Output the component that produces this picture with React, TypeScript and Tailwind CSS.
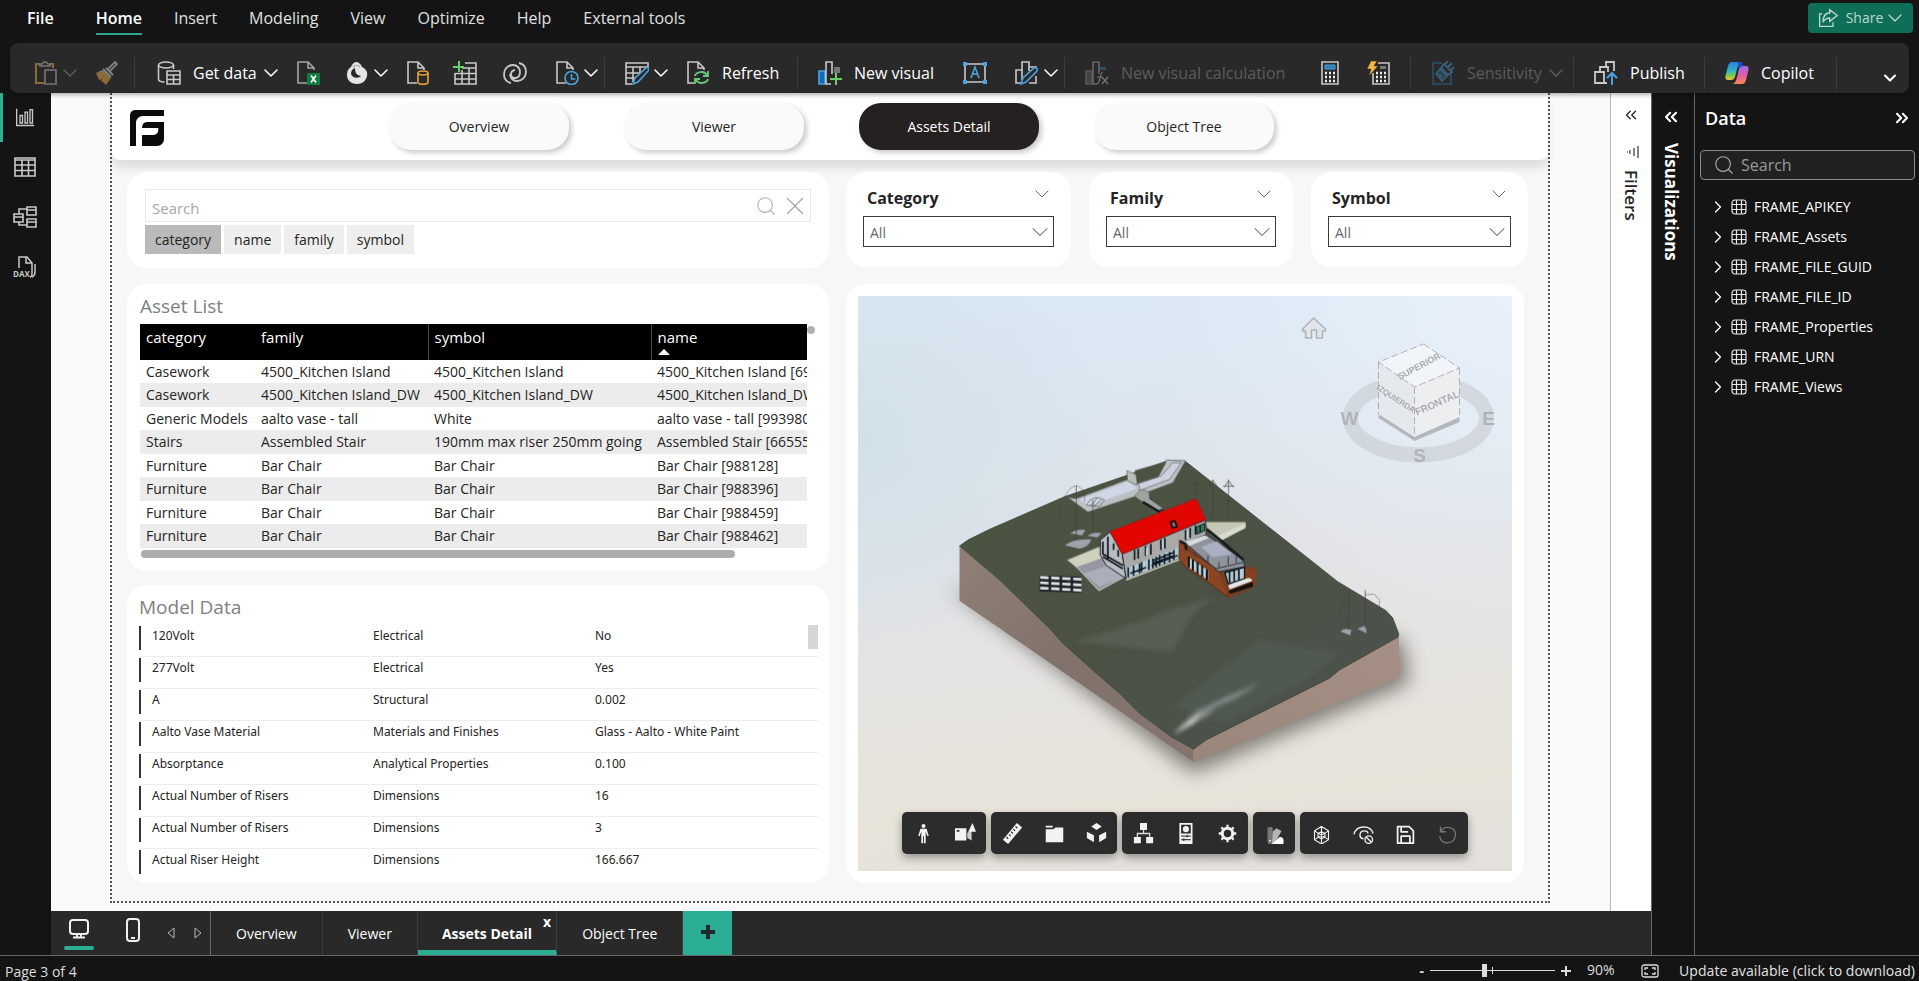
import type { ReactNode } from 'react';
import { ChevronDown, ChevronRight, ChevronsLeft, ChevronsRight, Search, X } from 'lucide-react';

const MENU = ['Insert', 'Modeling', 'View', 'Optimize', 'Help', 'External tools'];
const REPORT_PAGES = ['Overview', 'Viewer', 'Assets Detail', 'Object Tree'];
const ACTIVE_PAGE = 'Assets Detail';
const SEARCH_FIELDS = ['category', 'name', 'family', 'symbol'];

const ASSETS = [
  ['Casework', '4500_Kitchen Island', '4500_Kitchen Island', '4500_Kitchen Island [694112]'],
  ['Casework', '4500_Kitchen Island_DW', '4500_Kitchen Island_DW', '4500_Kitchen Island_DW [694205]'],
  ['Generic Models', 'aalto vase - tall', 'White', 'aalto vase - tall [993980]'],
  ['Stairs', 'Assembled Stair', '190mm max riser 250mm going', 'Assembled Stair [665552]'],
  ['Furniture', 'Bar Chair', 'Bar Chair', 'Bar Chair [988128]'],
  ['Furniture', 'Bar Chair', 'Bar Chair', 'Bar Chair [988396]'],
  ['Furniture', 'Bar Chair', 'Bar Chair', 'Bar Chair [988459]'],
  ['Furniture', 'Bar Chair', 'Bar Chair', 'Bar Chair [988462]'],
];

const MODEL_DATA = [
  ['120Volt', 'Electrical', 'No'],
  ['277Volt', 'Electrical', 'Yes'],
  ['A', 'Structural', '0.002'],
  ['Aalto Vase Material', 'Materials and Finishes', 'Glass - Aalto - White Paint'],
  ['Absorptance', 'Analytical Properties', '0.100'],
  ['Actual Number of Risers', 'Dimensions', '16'],
  ['Actual Number of Risers', 'Dimensions', '3'],
  ['Actual Riser Height', 'Dimensions', '166.667'],
];

const TABLES = [
  'FRAME_APIKEY',
  'FRAME_Assets',
  'FRAME_FILE_GUID',
  'FRAME_FILE_ID',
  'FRAME_Properties',
  'FRAME_URN',
  'FRAME_Views',
];

/* ---------- icons ---------- */

function Icon({ children, className = 'size-6' }: { children: ReactNode; className?: string }) {
  return (
    <svg viewBox="0 0 24 24" fill="none" stroke="#c8c8c8" strokeWidth="1.6" className={`${className} shrink-0`} aria-hidden="true">
      {children}
    </svg>
  );
}

const PAGE = 'M11 22H2V1h10l6 6v2M12 1v6h6';

const PasteIcon = () => (
  <Icon>
    <path d="M6 3H2v19h8M16 3h3v4" stroke="#8a6a35" strokeWidth="2" />
    <path d="M6 5V3h2l2-2h2l2 2h2v2z" stroke="#777" />
    <path d="M11 9h11v14H11z" stroke="#777" />
  </Icon>
);
const BrushIcon = () => (
  <Icon>
    <path d="M1 12l7-3 8 8-5 7c-3-3-4-4-5-4l1-2-3 1z" fill="#8a6a35" stroke="none" />
    <path d="M4 11l3-1 7 7" stroke="#777" strokeWidth="1" />
    <path d="M8 8l8 8M11 7l7 7M15 10l7-7-2-2-7 7" stroke="#808080" strokeWidth="1.800" />
  </Icon>
);
const GetDataIcon = () => (
  <Icon>
    <ellipse cx="9" cy="4" rx="7.5" ry="3" />
    <path d="M1.500 4v14c0 2 2 3 6 3M16.500 4v4M10 10h13v13H10zM10 14h13M16.500 14v9M10 18.500h13" />
  </Icon>
);
const ExcelIcon = () => (
  <Icon>
    <path d={PAGE} stroke="#a5a5a5" />
    <path d="M11 12h13v12H11z" fill="#107c41" stroke="none" />
    <path d="M15 14.500l5 7M20 14.500l-5 7" stroke="#fff" />
  </Icon>
);
const OneLakeIcon = () => (
  <Icon>
    <path d="M12 1c2 1 4 2 5 5 4 2 6 5 5 9-1 5-5 8-10 8S2 20 2 14c0-4 1-6 4-8 1-3 3-5 6-5z" fill="#e4e4e4" stroke="none" />
    <path d="M10 7c0 4 1 7 6 8-3 3-9 2-10-2 0-3 1-5 4-6z" fill="#292929" stroke="none" />
    <path d="M8 6c2-2 5-2 7 0" stroke="#aaa" />
  </Icon>
);
const SqlIcon = () => (
  <Icon>
    <path d={PAGE} />
    <path d="M12 12v9c0 3 10 3 10 0v-9" stroke="#e8a33d" fill="#292929" />
    <ellipse cx="17" cy="12" rx="5" ry="2" stroke="#e8a33d" />
  </Icon>
);
const EnterDataIcon = () => (
  <Icon>
    <path d="M12 2h11v21H2V12M9 7h14M2 12.500h21M2 18h21M9 9v14M16 7v16" />
    <path d="M6 0v11M0 6h11" stroke="#6bd06b" strokeWidth="2" />
  </Icon>
);
const DataverseIcon = () => (
  <Icon>
    <path
      d="M8 22c-5-1-7-4-7-9s4-9 9-9c4 0 7 3 7 7s-2 6-5 6-4-2-4-4 2-4 4-4M16 2c5 1 7 4 7 9s-4 9-9 9c-4 0-7-3-7-7"
      strokeWidth="1.8"
    />
  </Icon>
);
const RecentIcon = () => (
  <Icon>
    <path d={PAGE} />
    <circle cx="16.500" cy="17" r="6.500" stroke="#4aa3df" fill="#292929" />
    <path d="M16.500 13v5h4" stroke="#4aa3df" />
  </Icon>
);
const TransformIcon = () => (
  <Icon>
    <path d="M7 23H1V2h22v6M1 6h22M1 12h15M1 17h9M8 6v15M15 6v7" />
    <path d="M8 23l2-6L21 7c2-1 4 1 2 3L13 21z" stroke="#4aa3df" fill="#292929" />
  </Icon>
);
const RefreshIcon = () => (
  <Icon>
    <path d="M8 22H2V1h10l6 6v2M12 1v6h6" />
    <path d="M9 15c1-4 9-6 12-1M22 10v5h-5M22 18c-1 4-9 6-12 1M9 23v-5h5" stroke="#6bc77a" strokeWidth="1.800" />
  </Icon>
);
const NewVisualIcon = () => (
  <Icon>
    <path d="M1 10h6v13H1z" fill="#0f6cbd" stroke="#4aa3df" />
    <path d="M16 6h6v6h-6z" fill="#777" stroke="none" />
    <path d="M13 23H8V1h6v12" />
    <path d="M18 12v12M12 18h12" stroke="#6bd06b" strokeWidth="2" />
  </Icon>
);
const TextBoxIcon = () => (
  <Icon>
    <path d="M2 3h20v18H2z" />
    <path d="M0 1h4v4H0zM20 1h4v4h-4zM0 19h4v4H0zM20 19h4v4h-4z" fill="#4aa3df" stroke="none" />
    <path d="M8 17l4-11 4 11M9.500 13h5" stroke="#4aa3df" />
  </Icon>
);
const MoreVisualsIcon = () => (
  <Icon>
    <path d="M6 22H1V9h6v10M7 16V1h7v9M14 6h7v3M14 22h7v-7" />
    <path d="M6 23l2-6L19 7c2-1 4 1 3 3L11 21z" stroke="#4aa3df" fill="#292929" />
  </Icon>
);
const VisualCalcIcon = () => (
  <Icon>
    <path d="M1 10h6v13H1z" fill="#444" stroke="#555" />
    <path d="M8 23V1h6v12M8 23h4" stroke="#666" />
    <path d="M15 6h6v3h-6z" fill="#2d4f66" stroke="none" />
    <path d="M12 23c3 0 3-12 6-12M12 16h6M17 16l6 7M23 16l-6 7" stroke="#777" strokeWidth="1.200" />
  </Icon>
);
const CalculatorIcon = () => (
  <Icon>
    <path d="M4 1h16v22H4z" />
    <path d="M7 4h10v4H7z" fill="#2f7db5" stroke="#4aa3df" strokeWidth="1" />
    <path d="M7 12h10M7 16h10M7 20h10" strokeDasharray="2 2" strokeWidth="2.400" stroke="#eee" />
  </Icon>
);
const QuickMeasureIcon = () => (
  <Icon>
    <path d="M12 2h11v21H7V12" />
    <path d="M14 5h6v3h-6z" fill="#777" stroke="none" />
    <path d="M10 12h10M10 16h10M10 20h10" strokeDasharray="2 2" strokeWidth="2.400" stroke="#eee" />
    <path d="M5 0h6L8 5h4l-9 10 2-7H1z" fill="#f5b942" stroke="#292929" strokeWidth="0.500" />
  </Icon>
);
const SensitivityIcon = () => (
  <Icon>
    <path d="M11 2H2v21h18V13" stroke="#2b5069" />
    <path d="M5 13l4-5 7 7-5 5z" stroke="#3c5f78" fill="#2b3f4d" />
    <path d="M10 7l7 7 4-3-8-8zM14 3l3-3M17 6l4-4M20 9l3-3M8 13l3 3" stroke="#3c5f78" strokeWidth="1.800" />
  </Icon>
);
const PublishIcon = () => (
  <Icon>
    <path d="M13 22H1V11h9v11M6 10V6h8v5M12 5V1h8v9" strokeWidth="1.800" />
    <path d="M18 24V12M13 17l5-5 5 5" stroke="#4aa3df" strokeWidth="2" />
  </Icon>
);
const CopilotIcon = () => (
  <Icon>
    <defs>
      <linearGradient id="cop-a" x1="0" y1="0" x2="0" y2="1">
        <stop offset="0" stopColor="#2a7de1" />
        <stop offset="0.500" stopColor="#2fb6c9" />
        <stop offset="0.750" stopColor="#7cc84a" />
        <stop offset="1" stopColor="#f3c531" />
      </linearGradient>
      <linearGradient id="cop-b" x1="0" y1="0" x2="0" y2="1">
        <stop offset="0" stopColor="#9a6cf0" />
        <stop offset="0.500" stopColor="#e05aa8" />
        <stop offset="1" stopColor="#f58a4b" />
      </linearGradient>
    </defs>
    <path d="M7 1h9c-2 1-3 3-4 7l-2 8c-1 2-2 3-4 3H3c-3 0-3-3-2-6l2-8c1-3 2-4 4-4z" fill="url(#cop-a)" stroke="none" />
    <path d="M17 23H8c2-1 3-3 4-7l2-8c1-2 2-3 4-3h3c3 0 3 3 2 6l-2 8c-1 3-2 4-4 4z" fill="url(#cop-b)" stroke="none" />
    <path d="M13 1h3c1 0 2 2 2 4-3 0-4 1-5 4z" fill="#1b4fbf" stroke="none" />
  </Icon>
);

const ReportViewIcon = () => (
  <Icon className="size-5">
    <path d="M2 1v20h21M6 9h3v9H6zM12 5h3v13h-3zM18 2h3v16h-3z" />
  </Icon>
);
const TableViewIcon = () => (
  <Icon className="size-6">
    <path d="M2 3h20v18H2zM2 5h20M2 10h20M2 15.500h20M9 5v16M15.500 5v16" />
  </Icon>
);
const ModelViewIcon = () => (
  <Icon className="size-6">
    <path d="M1 9h9v8H1zM1 12h9M14 2h9v8h-9zM14 5h9M14 14h9v8h-9zM14 17h9M6 9V4h8M6 17v3h8" />
  </Icon>
);
const DaxViewIcon = () => (
  <svg viewBox="0 0 24 24" className="size-6 overflow-visible" fill="none" stroke="#c8c8c8" strokeWidth="1.500" aria-hidden="true">
    <path d="M6 13V2h8l5 6v10c0 3-1 4-2 4M13 2v6h6M22 9v8c0 3-1 4-3 5" />
    <text x="0" y="22" fontSize="8" fontWeight="700" fill="#c8c8c8" stroke="none" fontFamily="Open Sans, sans-serif">
      DAX
    </text>
  </svg>
);

const FrameLogo = () => (
  <svg viewBox="0 0 34 36" className="h-9 w-[34px] shrink-0" fill="#0b0b0b" role="img" aria-label="Frame">
    <path d="M0 36V6c0-4 2-6 6-6h28v6H13C9 6 6 9 6 13v23z" />
    <path d="M12 18c0-4 2-6 6-6h16v17c0 4-3 7-7 7H12V25h11c2 0 4-1 5-3v-4z" />
    <path d="M12 18.500h16M12 24.500h10c3 0 6-2 6-6" stroke="#fff" strokeWidth="1" fill="none" />
  </svg>
);

/* ---------- ribbon ---------- */

interface RibbonButtonProps {
  label: string;
  icon: ReactNode;
  width: string;
  showLabel?: boolean;
  menu?: boolean;
  disabled?: boolean;
}

function RibbonButton({ label, icon, width, showLabel, menu, disabled }: RibbonButtonProps) {
  return (
    <button
      type="button"
      aria-label={label}
      disabled={disabled}
      className={`${width} flex h-10 shrink-0 items-center whitespace-nowrap text-left text-base ${disabled ? 'text-[#5c5c5c]' : 'text-white'}`}
    >
      {icon}
      {showLabel && <span className="ml-3">{label}</span>}
      {menu && <ChevronDown className={`${showLabel ? 'ml-[2px]' : ''} size-6 shrink-0`} strokeWidth={1.5} />}
    </button>
  );
}

function RibbonGroup({ children, width }: { children: ReactNode; width: string }) {
  return <div className={`${width} flex h-8 shrink-0 items-center border-r border-[#3d3d3d] pl-5`}>{children}</div>;
}

function Ribbon() {
  return (
    <div className="relative z-10 mx-[10px] flex h-[50px] items-center rounded-lg bg-[#292929] pt-[10px] shadow-[0_2px_4px_rgba(0,0,0,0.3)]">
      <RibbonGroup width="w-[125px]">
        <RibbonButton label="Paste" icon={<PasteIcon />} width="ml-1 w-[61px]" menu disabled />
        <RibbonButton label="Format painter" icon={<BrushIcon />} width="w-6" disabled />
      </RibbonGroup>
      <RibbonGroup width="w-[470px]">
        <RibbonButton label="Get data" icon={<GetDataIcon />} width="ml-[2px] w-[139px]" showLabel menu />
        <RibbonButton label="Excel workbook" icon={<ExcelIcon />} width="w-[49px]" />
        <RibbonButton label="OneLake catalog" icon={<OneLakeIcon />} width="w-[61px]" menu />
        <RibbonButton label="SQL Server" icon={<SqlIcon />} width="w-[47px]" />
        <RibbonButton label="Enter data" icon={<EnterDataIcon />} width="w-[50px]" />
        <RibbonButton label="Dataverse" icon={<DataverseIcon />} width="w-[52px]" />
        <RibbonButton label="Recent sources" icon={<RecentIcon />} width="w-12" menu />
      </RibbonGroup>
      <RibbonGroup width="w-[193px]">
        <RibbonButton label="Transform data" icon={<TransformIcon />} width="w-[61px]" menu />
        <RibbonButton label="Refresh" icon={<RefreshIcon />} width="w-[100px]" showLabel />
      </RibbonGroup>
      <RibbonGroup width="w-[267px]">
        <RibbonButton label="New visual" icon={<NewVisualIcon />} width="w-[145px]" showLabel />
        <RibbonButton label="Text box" icon={<TextBoxIcon />} width="w-[52px]" />
        <RibbonButton label="More visuals" icon={<MoreVisualsIcon />} width="w-12" menu />
      </RibbonGroup>
      <RibbonGroup width="w-[346px]">
        <RibbonButton label="New visual calculation" icon={<VisualCalcIcon />} width="w-[233px]" showLabel disabled />
        <RibbonButton label="New measure" icon={<CalculatorIcon />} width="w-[48px]" />
        <RibbonButton label="Quick measure" icon={<QuickMeasureIcon />} width="w-6" />
      </RibbonGroup>
      <RibbonGroup width="w-[163px]">
        <RibbonButton label="Sensitivity" icon={<SensitivityIcon />} width="w-[136px]" showLabel menu disabled />
      </RibbonGroup>
      <RibbonGroup width="w-[131px]">
        <RibbonButton label="Publish" icon={<PublishIcon />} width="w-[100px]" showLabel />
      </RibbonGroup>
      <RibbonGroup width="w-[132px]">
        <RibbonButton label="Copilot" icon={<CopilotIcon />} width="w-[100px]" showLabel />
      </RibbonGroup>
      <button type="button" aria-label="Collapse ribbon" className="mr-[9px] ml-auto pt-[10px] text-white">
        <ChevronDown className="size-5" strokeWidth={2.5} />
      </button>
    </div>
  );
}

function MenuBar() {
  return (
    <header className="flex h-[43px] shrink-0 items-start pr-[6px] pl-[27px] text-base text-[#e0e0e0]">
      <nav className="flex items-start gap-8 pt-[6px]">
        <a href="#file" className="mr-[10px] font-semibold text-white">
          File
        </a>
        <a href="#home" className="h-[29px] border-b-2 border-[#2fa58c] font-semibold text-white">
          Home
        </a>
        {MENU.map((m) => (
          <a key={m} href={`#${m.toLowerCase()}`}>
            {m}
          </a>
        ))}
      </nav>
      <button type="button" className="mt-[3px] ml-auto flex h-[30px] w-[105px] items-center justify-center gap-2 rounded-[4px] bg-[#0f6e58] pl-1 text-sm text-[#b9d8d0]">
        <svg viewBox="0 0 24 24" className="size-5" fill="none" stroke="currentColor" strokeWidth="1.600" aria-hidden="true">
          <path d="M5 7H2v15h16v-5M14 2l9 7-9 7v-4c-4 0-6 1-8 5 0-7 3-11 8-11z" />
        </svg>
        <span className="flex items-center">
          Share
          <ChevronDown className="size-6" strokeWidth={1.25} />
        </span>
      </button>
    </header>
  );
}

function ViewRail() {
  return (
    <aside className="flex w-[51px] shrink-0 flex-col bg-[#141414]">
      <button type="button" aria-label="Report view" className="flex h-[49px] items-center justify-center border-l-3 border-[#2fae94] pr-1">
        <ReportViewIcon />
      </button>
      <button type="button" aria-label="Table view" className="flex h-[49px] items-center justify-center pr-[2px]">
        <TableViewIcon />
      </button>
      <button type="button" aria-label="Model view" className="flex h-[51px] items-center justify-center pr-[2px]">
        <ModelViewIcon />
      </button>
      <button type="button" aria-label="DAX query view" className="flex h-[50px] items-center justify-center pr-[2px]">
        <DaxViewIcon />
      </button>
    </aside>
  );
}

/* ---------- report ---------- */

function ReportHeader() {
  return (
    <div className="flex h-[67px] items-start rounded-b-lg bg-white pl-[18px] shadow-[0_8px_10px_rgba(0,0,0,0.1)]">
      <div className="mt-[17px]">
        <FrameLogo />
      </div>
      <nav className="mt-[10px] ml-[225px] flex gap-[55px]">
        {REPORT_PAGES.map((p) => (
          <button
            key={p}
            type="button"
            className={`h-[47px] w-[180px] rounded-[22px] text-sm shadow-[3px_3px_5px_rgba(0,0,0,0.2)] ${
              p === ACTIVE_PAGE ? 'bg-[#252121] text-white' : 'bg-[#fafafa] text-[#252423]'
            }`}
          >
            {p}
          </button>
        ))}
      </nav>
    </div>
  );
}

function SearchCard() {
  return (
    <section className="h-24 rounded-[20px] bg-white px-[18px] pt-[17px]">
      <div className="flex h-[33px] items-center border border-[#e9e9e9]">
        <input
          type="text"
          aria-label="Search"
          placeholder="Search"
          className="min-w-0 flex-1 bg-transparent pt-[6px] pl-[6px] text-[15px] outline-none placeholder:text-[#a9a6a3]"
        />
        <button type="button" aria-label="Run search" className="mr-[3px]">
          <Search className="size-[22px] text-[#b5b5b5]" strokeWidth={1.25} />
        </button>
        <button type="button" aria-label="Clear search">
          <X className="size-[30px] text-[#a5a5a5]" strokeWidth={1} />
        </button>
      </div>
      <div className="mt-[3px] flex gap-[3px] text-sm text-[#252423]">
        {SEARCH_FIELDS.map((f, i) => (
          <button key={f} type="button" className={`h-[29px] px-[10px] ${i === 0 ? 'bg-[#bababa]' : 'bg-[#eeeeee]'}`}>
            {f}
          </button>
        ))}
      </div>
    </section>
  );
}

function Slicer({ label }: { label: string }) {
  const id = `slicer-${label.toLowerCase()}`;
  return (
    <section className="h-[95px] rounded-[20px] bg-white px-[17px] pt-[14px]">
      <div className="flex h-6 items-start justify-between pl-1">
        <label htmlFor={id} className="text-base font-bold text-[#252423]">
          {label}
        </label>
        <ChevronDown className="size-6 shrink-0 -translate-y-1 text-[#666]" strokeWidth={1} />
      </div>
      <div className="relative mt-[6px]">
        <select id={id} className="h-[31px] w-full appearance-none rounded-none border border-[#3b3a39] bg-white px-[6px] pt-[2px] text-sm text-[#666]">
          <option>All</option>
        </select>
        <ChevronDown className="pointer-events-none absolute top-[2px] right-0 size-7 text-[#666]" strokeWidth={0.9} />
      </div>
    </section>
  );
}

function AssetList() {
  return (
    <section className="h-[287px] rounded-[20px] bg-white pt-[7px] pr-[14px] pl-[13px]">
      <h2 className="h-[33px] text-[19px] leading-[30px] text-[#808080]">Asset List</h2>
      <div className="flex">
        <div className="min-w-0 flex-1 overflow-hidden">
          <table className="w-[820px] table-fixed border-collapse text-sm text-[#252423]">
            <colgroup>
              <col className="w-[115px]" />
              <col className="w-[173px]" />
              <col className="w-[223px]" />
              <col />
            </colgroup>
            <thead>
              <tr className="h-9 bg-black text-left text-[15px] leading-[18px] text-white">
                <th className="pt-1 pl-[6px] align-top font-normal">category</th>
                <th className="border-r border-[#444] pt-1 pl-[6px] align-top font-normal">family</th>
                <th className="border-r border-[#444] pt-1 pl-[6px] align-top font-normal">symbol</th>
                <th className="pt-1 pl-[6px] align-top font-normal" aria-sort="ascending">
                  name
                  <svg viewBox="0 0 12 6" className="mt-[3px] h-[6px] w-3" fill="#fff" aria-hidden="true">
                    <path d="M6 0l6 6H0z" />
                  </svg>
                </th>
              </tr>
            </thead>
            <tbody>
              {ASSETS.map((row, i) => (
                <tr key={row[3]} className={i % 2 ? 'h-6 bg-[#ececec]' : 'h-[23px]'}>
                  {row.map((cell, c) => (
                    <td key={c} className="py-0 pl-[6px] leading-[22px] whitespace-nowrap">
                      {cell}
                    </td>
                  ))}
                </tr>
              ))}
            </tbody>
          </table>
        </div>
        <div className="w-2 pt-[2px]">
          <div className="size-2 rounded-full bg-[#b0b0b0]" />
        </div>
      </div>
      <div className="mt-[2px] ml-px h-2 w-[88%] rounded-full bg-[#adadab]" />
    </section>
  );
}

function ModelData() {
  return (
    <section className="h-[298px] rounded-[20px] bg-white pt-[7px] pr-[11px] pl-3">
      <h2 className="h-[33px] text-[19px] leading-[30px] text-[#808080]">Model Data</h2>
      <div className="relative">
        <table className="w-full table-fixed border-separate border-spacing-0 font-['Noto_Sans','Open_Sans',sans-serif] text-xs text-[#252423]">
          <colgroup>
            <col className="w-[234px]" />
            <col className="w-[222px]" />
            <col />
          </colgroup>
          <tbody>
            {MODEL_DATA.map((row, i) => (
              <tr key={i} className="h-8">
                {row.map((cell, c) => (
                  <td key={c} className={`p-0 align-top ${i < MODEL_DATA.length - 1 ? 'border-b border-[#ededed]' : ''}`}>
                    <div className={c === 0 ? 'mt-px h-6 border-l-2 border-[#333] pl-[11px] leading-5' : 'mt-px h-6 leading-5'}>{cell}</div>
                  </td>
                ))}
              </tr>
            ))}
          </tbody>
        </table>
        <div className="absolute top-0 right-0 h-6 w-[10px] bg-[#d6d6d6]" />
      </div>
    </section>
  );
}

/* ---------- 3D viewer ---------- */

function Terrain() {
  return (
    <g transform="translate(82 144) scale(0.3333)">
      <path d="M40 450L760 1000 1410 730 1390 600 900 500z" fill="#4c4641" opacity="0.65" filter="url(#ground-blur)" />
      <path d="M60 318L180 420 330 565 370 610 465 695 540 760 600 820 695 890 762 928V966L60 482z" fill="url(#side-left)" />
      <path d="M762 928L800 900 1170 715 1200 690 1378 582 1381 712 762 966z" fill="url(#side-right)" />
      <path
        d="M60 318L85 300 150 268 375 170 565 105 685 62 738 64 1195 425 1340 512 1360 534 1378 582 1375 592 1200 690 1170 715 800 900 762 928 695 890 600 820 540 760 465 695 370 610 330 565 180 420z"
        fill="url(#grass)"
        stroke="#3a4034"
        strokeWidth="2"
      />
      {/* worn patches */}
      <g filter="url(#soft)">
        <path d="M400 605Q560 560 700 505L830 470Q760 510 740 560L700 636 600 625z" fill="#6a7568" opacity="0.35" />
        <path d="M700 800L800 720 960 600 1200 640 1100 720 860 850z" fill="#5a6a66" opacity="0.25" />
        <path d="M700 885Q760 810 800 800L860 770 960 730 890 775 830 800 800 830z" fill="#a9b3b0" opacity="0.55" />
        <path d="M705 882Q740 850 790 815L760 850z" fill="#dde2e2" />
      </g>
      {/* driveway */}
      <g stroke="#5d6263" strokeWidth="2">
        <path d="M385 172L410 176 565 118 590 132 655 112 680 60 738 62 700 128 600 165 445 216z" fill="#bcc1c3" />
        <path d="M420 178L565 124 595 145 470 190 440 196z" fill="#cfd6e4" stroke="none" />
        <path d="M598 130L665 108 700 68 725 68 690 118 600 152z" fill="#cdd2e0" />
        <path d="M562 92L592 104V135L564 122z" fill="#b9bfb8" />
        <path d="M586 92L680 66 656 110 594 128z" fill="#4b5340" />
        <path d="M600 165L630 170 676 210 660 218z" fill="#22262a" />
        <path d="M606 148L628 156 630 176 670 205 650 215 584 168z" fill="#9fa49f" />
        <path d="M610 186L660 216" stroke="#111" strokeWidth="7" />
        <path d="M440 195Q460 160 495 180L480 200zM452 200L474 172M462 200L486 178" fill="none" stroke="#555a63" />
      </g>
      {/* terraces */}
      <path d="M383 360L480 320 500 362 410 382z" fill="#ced1bd" stroke="#8c907d" strokeWidth="2" />
      <path d="M410 380L495 350 560 408 478 452z" fill="#9698a1" stroke="#d0d2c8" strokeWidth="3" />
      <path d="M432 400L520 372 562 408 480 440z" fill="#acafbb" />
      <path d="M795 246H918V262L840 302 810 280z" fill="#c5c8b5" stroke="#858976" strokeWidth="2" />
      <path d="M828 290L918 250V264L845 302z" fill="#dadccf" />
      {/* main house */}
      <path d="M482 300L512 276 548 342 560 416 500 376 482 345z" fill="#b7bdc2" stroke="#20252b" strokeWidth="3" />
      <path d="M490 305V345M505 290V356M522 310V330M536 330V350M490 342L550 376M490 350L550 386" stroke="#131820" strokeWidth="5" />
      <path d="M548 342L798 240 800 285 716 358 560 418z" fill="#a9a9a7" stroke="#20252b" strokeWidth="3" />
      <path d="M560 385L716 322V355L562 416z" fill="#b4cbd6" />
      <path
        d="M566 382V412M582 376V408M600 370V400M606 366V396M628 358V390M640 355V385M650 350V382M660 345V378M675 342V374M690 336V368M703 330V360M572 400L620 382M636 376L714 346M640 362L700 338M640 370L700 348"
        stroke="#111b25"
        strokeWidth="5"
      />
      <path d="M585 330V360M596 326V356M618 318V348M634 312V344M664 298V330M676 294V325M738 270V300M752 264V294M768 256V284" stroke="#111b25" strokeWidth="5" />
      <path d="M622 322V346M670 300V325M744 270V296" stroke="#c3dae6" strokeWidth="5" />
      <path d="M770 262L795 250V272L772 282z" fill="#318064" stroke="#0e1d1b" strokeWidth="3" />
      <path d="M782 254V278" stroke="#0e1d1b" strokeWidth="4" />
      <path d="M560 420L720 358" stroke="#c6c9b8" strokeWidth="5" />
      <path d="M512 274L770 176 798 238 548 342z" fill="#e10600" stroke="#9b1b14" strokeWidth="2" />
      <path d="M693 246L706 243 712 260 699 264z" fill="#777" stroke="#190707" strokeWidth="5" />
      {/* annex */}
      <path d="M720 300L838 378 868 474 810 430 740 385 718 355z" fill="#8a4524" stroke="#4a2111" strokeWidth="2" />
      <path d="M838 400L948 380V440L868 474z" fill="#7d3d20" />
      <path d="M736 308L800 284 912 360 915 380 838 395z" fill="#8e939d" stroke="#2a2e35" strokeWidth="3" />
      <path d="M784 320L832 304 880 342 820 352z" fill="#aab0c1" />
      <path d="M735 306L795 286 808 294 750 318z" fill="#d8dadd" />
      <path d="M802 268L842 300 912 360M722 304L738 312 740 330" fill="none" stroke="#17191c" strokeWidth="8" />
      <path d="M745 328L830 386 915 366M765 335V350M805 346V370M838 366V384M866 350V375M890 345V368" fill="none" stroke="#33373d" strokeWidth="3" />
      <path d="M745 350L806 392V420L748 382z" fill="#c0d2d9" />
      <path d="M748 350V382M760 358V392M774 366V402M788 376V410M802 388V420" stroke="#10161c" strokeWidth="6" />
      <path d="M856 398L915 382V416L866 432z" fill="#b8ccd8" stroke="#11161a" strokeWidth="4" />
      <path d="M870 396V428M884 392V424M898 388V420" stroke="#11161a" strokeWidth="5" />
      <path d="M866 435L930 412 940 422 870 448z" fill="#e4e7e9" />
      <path d="M868 452L940 426V440L870 462z" fill="#111" />
      <path d="M918 376L952 396 946 440 936 415 918 412z" fill="#87401f" />
      {/* solar panels */}
      <path d="M300 406L425 410V458L300 454z" fill="#20252a" />
      <g stroke="#dfe6ea" strokeWidth="8" strokeDasharray="25 8">
        <path d="M302 412L426 418M302 428L426 435M302 444L426 451" />
      </g>
      {/* trees */}
      <g fill="#9da2ac" stroke="#6d7279" strokeWidth="1">
        <path d="M392 280Q410 266 438 270L428 286z" />
        <path d="M444 288Q462 274 486 280L474 292z" />
        <path d="M376 316Q400 296 455 298 450 320 420 326z" />
        <path d="M1203 574Q1215 562 1236 570L1232 586z" />
        <path d="M1254 566L1278 556 1281 580z" />
      </g>
      <g stroke="#3f423e" strokeWidth="2" fill="none">
        <path d="M410 136V300M460 180V276M770 122V168M820 120V236M867 118V228M1228 455V570M1277 450V565" />
        <path d="M376 170Q395 130 420 140 440 160 434 190M366 190Q354 230 372 270 390 290 410 260" strokeDasharray="5 3" />
        <path d="M758 142L770 122 784 140M808 140L820 120 834 142M854 142L867 122 882 142M850 138H884" />
        <path d="M1277 464L1304 462 1320 480 1318 505M1230 470Q1195 490 1202 530L1226 542" strokeDasharray="6 3" />
      </g>
    </g>
  );
}

function ViewCube() {
  return (
    <g fontFamily="Liberation Sans, Arial, sans-serif" fontWeight="700">
      <ellipse cx="561" cy="122" rx="68" ry="37" fill="none" stroke="#c8ccd2" strokeOpacity="0.6" strokeWidth="15" />
      <path d="M521 118L557 141 602 121 602 126 557 145 521 122z" fill="#b4b7ba" />
      <path d="M566 48L602 72 557 91 521 66z" fill="#f1f4f8" />
      <path d="M521 66L557 91V140L521 118z" fill="#e6e9ec" />
      <path d="M557 91L602 72V121L557 140z" fill="#eceef0" />
      <path d="M566 48L602 72 557 91 521 66zM521 66V118M557 91V140M602 72V121" fill="none" stroke="#aeb2b7" strokeDasharray="7 3" />
      <g fill="#a6aaaf" fontSize="10" textAnchor="middle">
        <text transform="translate(563 73) rotate(-28)" fontSize="9">
          SUPERIOR
        </text>
        <text transform="translate(581 110) rotate(-24)">FRONTAL</text>
        <text transform="translate(537 105) rotate(33)" fontSize="8">
          IZQUIERDA
        </text>
      </g>
      <g fill="#b0b3b7" fontSize="19" textAnchor="middle">
        <text x="492" y="129">W</text>
        <text x="631" y="129">E</text>
        <text x="562" y="166">S</text>
      </g>
      <path d="M445 33L456 22 468 33V35H465V42H459V34H454V42H448V35H445z" fill="#e1e4ea" stroke="#aeb1b8" strokeWidth="1.500" strokeLinejoin="round" />
    </g>
  );
}

function Scene() {
  return (
    <svg viewBox="0 0 655 575" preserveAspectRatio="xMidYMid slice" className="block h-full w-full" role="img" aria-label="3D model of a house on a sloped site">
      <defs>
        <linearGradient id="sky" x1="0.400" y1="0" x2="0.500" y2="1">
          <stop offset="0" stopColor="#dae8f5" />
          <stop offset="0.250" stopColor="#dde5ed" />
          <stop offset="0.450" stopColor="#e1e3e7" />
          <stop offset="0.600" stopColor="#e5e4e3" />
          <stop offset="0.880" stopColor="#e8e4da" />
          <stop offset="1" stopColor="#e4e0dc" />
        </linearGradient>
        <radialGradient id="haze-right" cx="1" cy="0" r="0.550">
          <stop offset="0" stopColor="#e8f1fb" />
          <stop offset="1" stopColor="#e8f1fb" stopOpacity="0" />
        </radialGradient>
        <radialGradient id="haze-left" cx="0" cy="0.250" r="0.400">
          <stop offset="0" stopColor="#d1e0e8" />
          <stop offset="1" stopColor="#d1e0e8" stopOpacity="0" />
        </radialGradient>
        <linearGradient id="grass" x1="0" y1="0" x2="1" y2="0.800">
          <stop offset="0" stopColor="#4b533f" />
          <stop offset="0.600" stopColor="#4b5245" />
          <stop offset="1" stopColor="#4d524d" />
        </linearGradient>
        <linearGradient id="side-left" x1="0" y1="0" x2="1" y2="1">
          <stop offset="0" stopColor="#8f7f77" />
          <stop offset="0.500" stopColor="#80726b" />
          <stop offset="1" stopColor="#85746d" />
        </linearGradient>
        <linearGradient id="side-right" x1="0" y1="1" x2="1" y2="0">
          <stop offset="0" stopColor="#9a857a" />
          <stop offset="1" stopColor="#a69085" />
        </linearGradient>
        <filter id="ground-blur" x="-20%" y="-20%" width="140%" height="140%">
          <feGaussianBlur stdDeviation="28" />
        </filter>
        <filter id="soft" x="-20%" y="-20%" width="140%" height="140%">
          <feGaussianBlur stdDeviation="6" />
        </filter>
      </defs>
      <rect width="655" height="575" fill="url(#sky)" />
      <rect width="655" height="575" fill="url(#haze-right)" />
      <rect width="655" height="575" fill="url(#haze-left)" />
      <Terrain />
      <ViewCube />
    </svg>
  );
}

const TOOL_GROUPS: { name: string; draw: ReactNode }[][] = [
  [
    {
      name: 'First person',
      draw: (
        <g fill="#f2f2f2" stroke="none">
          <circle cx="12" cy="3.500" r="2.300" />
          <path d="M8.500 6.500h7l2.500 8-1.500.5-2-5V23h-2v-8h-1v8h-2V10l-2 5-1.500-.5z" />
        </g>
      ),
    },
    {
      name: 'Camera',
      draw: (
        <g fill="#f2f2f2" stroke="none">
          <path fillRule="evenodd" d="M0 6h13v14H0zM2 8v2h3V8z" />
          <path d="M14 11l5-3v12l-5-3z" fill="#ccc" />
          <path d="M15 10L20 0l4 10z" />
        </g>
      ),
    },
  ],
  [
    {
      name: 'Measure',
      draw: (
        <g>
          <path d="M1 19L17 0l6 5L7 24z" fill="#f2f2f2" stroke="none" />
          <path d="M5 16l2 2M8 13l2 2M10.500 10l2 2M13 7l2 2M15.500 4l2 2" stroke="#2c2c2c" strokeWidth="1.300" />
        </g>
      ),
    },
    { name: 'Files', draw: <path d="M2 3h8v2H2zM2 7h9l2-2h9v17H2z" fill="#f2f2f2" stroke="none" /> },
    {
      name: 'Explode',
      draw: <path d="M12 0l6 4-6 4-6-4zM1 10l8 4v8l-8-5zM23 10l-8 4v8l8-5z" fill="#f2f2f2" stroke="none" />,
    },
  ],
  [
    {
      name: 'Model browser',
      draw: (
        <g>
          <path d="M8 0h8v8H8zM1 16h8v7H1zM15 16h8v7h-8z" fill="#f2f2f2" stroke="none" />
          <path d="M12 8v4M5 16v-4h14v4" stroke="#ddd" strokeWidth="1.500" />
        </g>
      ),
    },
    {
      name: 'Properties',
      draw: (
        <g>
          <path fillRule="evenodd" d="M5 0h15v24H5zM7 2v10h11V2z" fill="#f2f2f2" stroke="none" />
          <circle cx="12.500" cy="7" r="3.500" fill="#f2f2f2" stroke="none" />
          <path d="M7 15h11M7 19h11M14 13.500v3M10 17.500v3" stroke="#444" />
        </g>
      ),
    },
    {
      name: 'Settings',
      draw: (
        <g stroke="#f2f2f2">
          <circle cx="12" cy="12" r="6" strokeWidth="3.500" />
          <path d="M12 2v3M12 19v3M2 12h3M19 12h3M5 5l2 2M17 17l2 2M19 5l-2 2M7 17l-2 2" strokeWidth="2.600" />
        </g>
      ),
    },
  ],
  [
    {
      name: 'Colors',
      draw: (
        <g stroke="none">
          <path d="M4 6c0-2 6-2 6 0v18H7c-2 0-3-1-3-3z" fill="#777" />
          <path d="M10 10l4-4 6 3-8 15H9z" fill="#b5b5b5" />
          <path d="M9 24l9-8c4 0 5 3 4 8z" fill="#fff" />
          <circle cx="7" cy="20" r="1" fill="#fff" />
        </g>
      ),
    },
  ],
  [
    {
      name: 'Section box',
      draw: <path d="M12 4l8 5v10l-8 5-8-5V9zM12 4v20M4 9l16 10M20 9L4 19M12 10l4 2v4l-4 2-4-2v-4z" stroke="#eee" strokeWidth="1.300" />,
    },
    {
      name: 'Hide',
      draw: (
        <g stroke="#eee">
          <path d="M1 13C4 2 20 2 23 12M12 18c-6-1-5-9 1-9 2 0 4 1 4 3" />
          <circle cx="18" cy="19" r="4.300" />
          <path d="M15 16l6 6" />
        </g>
      ),
    },
    {
      name: 'Save',
      draw: <path d="M3 4h13l5 5v14H3zM7 4v6h8M7 23v-8h10v8" stroke="#f2f2f2" strokeWidth="2" strokeLinejoin="round" />,
    },
    { name: 'Undo', draw: <path d="M4 4v6h6M4 10c4-8 18-6 17 4-1 11-16 12-18 1" stroke="#777" /> },
  ],
];

function Viewer() {
  return (
    <section className="mr-1 flex min-h-0 flex-1 flex-col rounded-[20px] bg-white px-3 py-3">
      <div className="relative min-h-0 flex-1">
        <div className="absolute inset-0">
          <Scene />
        </div>
        <div className="absolute inset-x-0 bottom-[17px] flex justify-center gap-[5px]">
          {TOOL_GROUPS.map((group, i) => (
            <div key={i} className="flex rounded-[5px] bg-[#2c2c2c] shadow-[0_4px_8px_rgba(0,0,0,0.35)]">
              {group.map((tool) => (
                <button key={tool.name} type="button" aria-label={tool.name} className="flex h-[42px] w-[42px] items-center justify-center">
                  <Icon className="size-[21px]">{tool.draw}</Icon>
                </button>
              ))}
            </div>
          ))}
        </div>
      </div>
    </section>
  );
}

function Report() {
  return (
    <main className="min-w-0 flex-1 bg-[#fafafa] pr-[60px] pb-2 pl-[59px]">
      <div className="flex h-full flex-col border-x-2 border-b-2 border-dotted border-[#555] bg-[#f7f7f7]">
        <ReportHeader />
        <div className="grid min-h-0 flex-1 grid-cols-[702fr_682fr] gap-[17px] pt-3 pr-5 pb-[18px] pl-[15px]">
          <div className="flex min-w-0 flex-col">
            <SearchCard />
            <div className="h-4" />
            <AssetList />
            <div className="h-[14px]" />
            <ModelData />
          </div>
          <div className="flex min-w-0 flex-col gap-[17px]">
            <div className="grid grid-cols-[225fr_204fr_217fr] gap-[18px]">
              <Slicer label="Category" />
              <Slicer label="Family" />
              <Slicer label="Symbol" />
            </div>
            <Viewer />
          </div>
        </div>
      </div>
    </main>
  );
}

/* ---------- side panes ---------- */

function FiltersPane() {
  return (
    <aside className="flex w-[41px] shrink-0 flex-col items-center border-l border-[#b8b8b8] bg-white pt-[13px] text-[#252423]">
      <button type="button" aria-label="Expand filters">
        <ChevronsLeft className="size-[18px]" strokeWidth={1.75} />
      </button>
      <svg viewBox="0 0 12 12" className="mt-[22px] ml-1 size-3" stroke="#444" strokeWidth="1.300" aria-hidden="true">
        <path d="M11 0v12M7 2v8M3 4v4M0 6h1" />
      </svg>
      <span className="mt-3 text-[17px] leading-6 font-semibold [writing-mode:vertical-rl]">Filters</span>
    </aside>
  );
}

function VisualizationsPane() {
  return (
    <aside className="flex w-[43px] shrink-0 flex-col items-center border-l border-[#666] pt-[14px] pr-1 text-white">
      <button type="button" aria-label="Expand visualizations">
        <ChevronsLeft className="size-5" strokeWidth={2.5} />
      </button>
      <span className="mt-4 text-[17px] leading-6 font-bold [writing-mode:vertical-rl]">Visualizations</span>
    </aside>
  );
}

function DataPane() {
  return (
    <aside className="w-[225px] shrink-0 border-l border-[#666] pt-[11px] pr-1 pl-[5px] text-white">
      <div className="flex items-center justify-between pr-[3px] pl-[5px]">
        <h2 className="text-lg font-semibold">Data</h2>
        <button type="button" aria-label="Collapse data">
          <ChevronsRight className="size-5" strokeWidth={2.5} />
        </button>
      </div>
      <label className="mt-[18px] flex h-[30px] items-center gap-[6px] rounded-[4px] border border-[#8a8a8a] bg-[#212121] pl-[12px]">
        <Search className="size-[22px] shrink-0 text-[#a8a8a8]" strokeWidth={1.25} />
        <input type="text" aria-label="Search data" placeholder="Search" className="w-full min-w-0 bg-transparent text-base outline-none placeholder:text-[#9a9a9a]" />
      </label>
      <ul className="mt-[12px]">
        {TABLES.map((t) => (
          <li key={t}>
            <button type="button" className="flex h-[30px] items-center pl-2 text-sm">
              <ChevronRight className="size-5" strokeWidth={1.5} />
              <svg viewBox="0 0 16 16" className="mr-[7px] ml-[3px] size-4" fill="none" stroke="#e8e8e8" strokeWidth="1.200" aria-hidden="true">
                <rect x="1" y="1" width="14" height="14" rx="3" />
                <path d="M1 5.500h14M1 10.500h14M5.500 1v14M10.500 1v14" />
              </svg>
              {t}
            </button>
          </li>
        ))}
      </ul>
    </aside>
  );
}

/* ---------- footer ---------- */

function PageTabs() {
  return (
    <div className="flex h-11 shrink-0 bg-[#292929] text-sm text-white">
      <div className="flex w-[160px] shrink-0 items-start border-r border-[#666]">
        <button type="button" aria-label="Desktop layout" className="ml-[13px] flex h-full w-[30px] flex-col items-center pt-2">
          <svg viewBox="0 0 20 20" className="size-5" fill="none" stroke="#f0f0f0" strokeWidth="2" aria-hidden="true">
            <rect x="1" y="1" width="18" height="14" rx="3" />
            <path d="M8 15v3M12 15v3M4 18.500h12" />
          </svg>
          <span className="mt-[7px] h-1 w-full rounded-full bg-[#2cae94]" />
        </button>
        <button type="button" aria-label="Mobile layout" className="mt-[7px] ml-[32px]">
          <svg viewBox="0 0 14 24" className="h-6 w-[14px]" fill="none" stroke="#f0f0f0" strokeWidth="2" aria-hidden="true">
            <rect x="1" y="1" width="12" height="22" rx="3" />
            <path d="M5 20h4" />
          </svg>
        </button>
        <button type="button" aria-label="Previous page" className="mt-4 ml-[27px]">
          <svg viewBox="0 0 8 12" className="h-3 w-2" fill="none" stroke="#b5b5b5" aria-hidden="true">
            <path d="M7 1v10L1 6z" />
          </svg>
        </button>
        <button type="button" aria-label="Next page" className="mt-4 ml-[19px]">
          <svg viewBox="0 0 8 12" className="h-3 w-2" fill="none" stroke="#b5b5b5" aria-hidden="true">
            <path d="M1 1v10l6-5z" />
          </svg>
        </button>
      </div>
      {REPORT_PAGES.map((p) =>
        p === ACTIVE_PAGE ? (
          <div key={p} className="relative flex border-r border-b-[5px] border-r-[#3d3d3d] border-b-[#2cae94]">
            <button type="button" className="px-6 pt-[6px] font-bold">
              {p}
            </button>
            <button type="button" aria-label="Delete page" className="absolute top-0 right-[5px] text-sm leading-[22px] font-bold">
              x
            </button>
          </div>
        ) : (
          <button key={p} type="button" className="border-r border-[#3d3d3d] px-[25px] pt-px">
            {p}
          </button>
        ),
      )}
      <button type="button" aria-label="New page" className="flex w-[49px] items-center justify-center bg-[#2cae94] pb-[2px]">
        <svg viewBox="0 0 14 14" className="size-[14px]" stroke="#1c2b28" strokeWidth="4" aria-hidden="true">
          <path d="M7 0v14M0 7h14" />
        </svg>
      </button>
    </div>
  );
}

function StatusBar() {
  return (
    <footer className="flex h-[26px] shrink-0 items-center border-t border-[#666] pr-1 pl-[5px] text-sm text-[#dcdcdc]">
      <span className="pt-[6px]">Page 3 of 4</span>
      <div className="ml-auto flex items-center pt-1">
        <button type="button" aria-label="Zoom out" className="mr-[6px] font-bold leading-4">
          -
        </button>
        <input
          type="range"
          aria-label="Zoom"
          min={10}
          max={200}
          defaultValue={92}
          className="h-4 w-[125px] appearance-none bg-[linear-gradient(#dcdcdc,#dcdcdc),linear-gradient(#dcdcdc,#dcdcdc)] bg-[length:100%_1px,1px_7px] bg-center bg-no-repeat [&::-webkit-slider-thumb]:h-[13px] [&::-webkit-slider-thumb]:w-[5px] [&::-webkit-slider-thumb]:appearance-none [&::-webkit-slider-thumb]:bg-[#dcdcdc]"
        />
        <button type="button" aria-label="Zoom in" className="ml-[6px]">
          <svg viewBox="0 0 10 10" className="size-[10px]" stroke="#dcdcdc" strokeWidth="2" aria-hidden="true">
            <path d="M5 0v10M0 5h10" />
          </svg>
        </button>
        <span className="ml-4 w-[38px] pb-[2px]">90%</span>
        <button type="button" aria-label="Fit to page" className="mr-[20px] ml-4">
          <svg viewBox="0 0 18 14" className="h-[14px] w-[18px]" fill="none" stroke="#dcdcdc" strokeWidth="1.300" aria-hidden="true">
            <rect x="1" y="1" width="16" height="12" rx="2" />
            <path d="M4 6V4h3M14 6V4h-3M4 8v2h3M14 8v2h-3" />
          </svg>
        </button>
        <a href="#update" className="font-['Noto_Sans','Open_Sans',sans-serif]">
          Update available (click to download)
        </a>
      </div>
    </footer>
  );
}

export default function App() {
  return (
    <div className="flex h-screen flex-col overflow-hidden bg-[#141414] font-['Open_Sans','Noto_Sans',sans-serif]">
      <MenuBar />
      <Ribbon />
      <div className="flex min-h-0 flex-1">
        <ViewRail />
        <div className="flex min-w-0 flex-1 flex-col">
          <div className="flex min-h-0 flex-1">
            <Report />
            <FiltersPane />
          </div>
          <PageTabs />
        </div>
        <VisualizationsPane />
        <DataPane />
      </div>
      <StatusBar />
    </div>
  );
}
